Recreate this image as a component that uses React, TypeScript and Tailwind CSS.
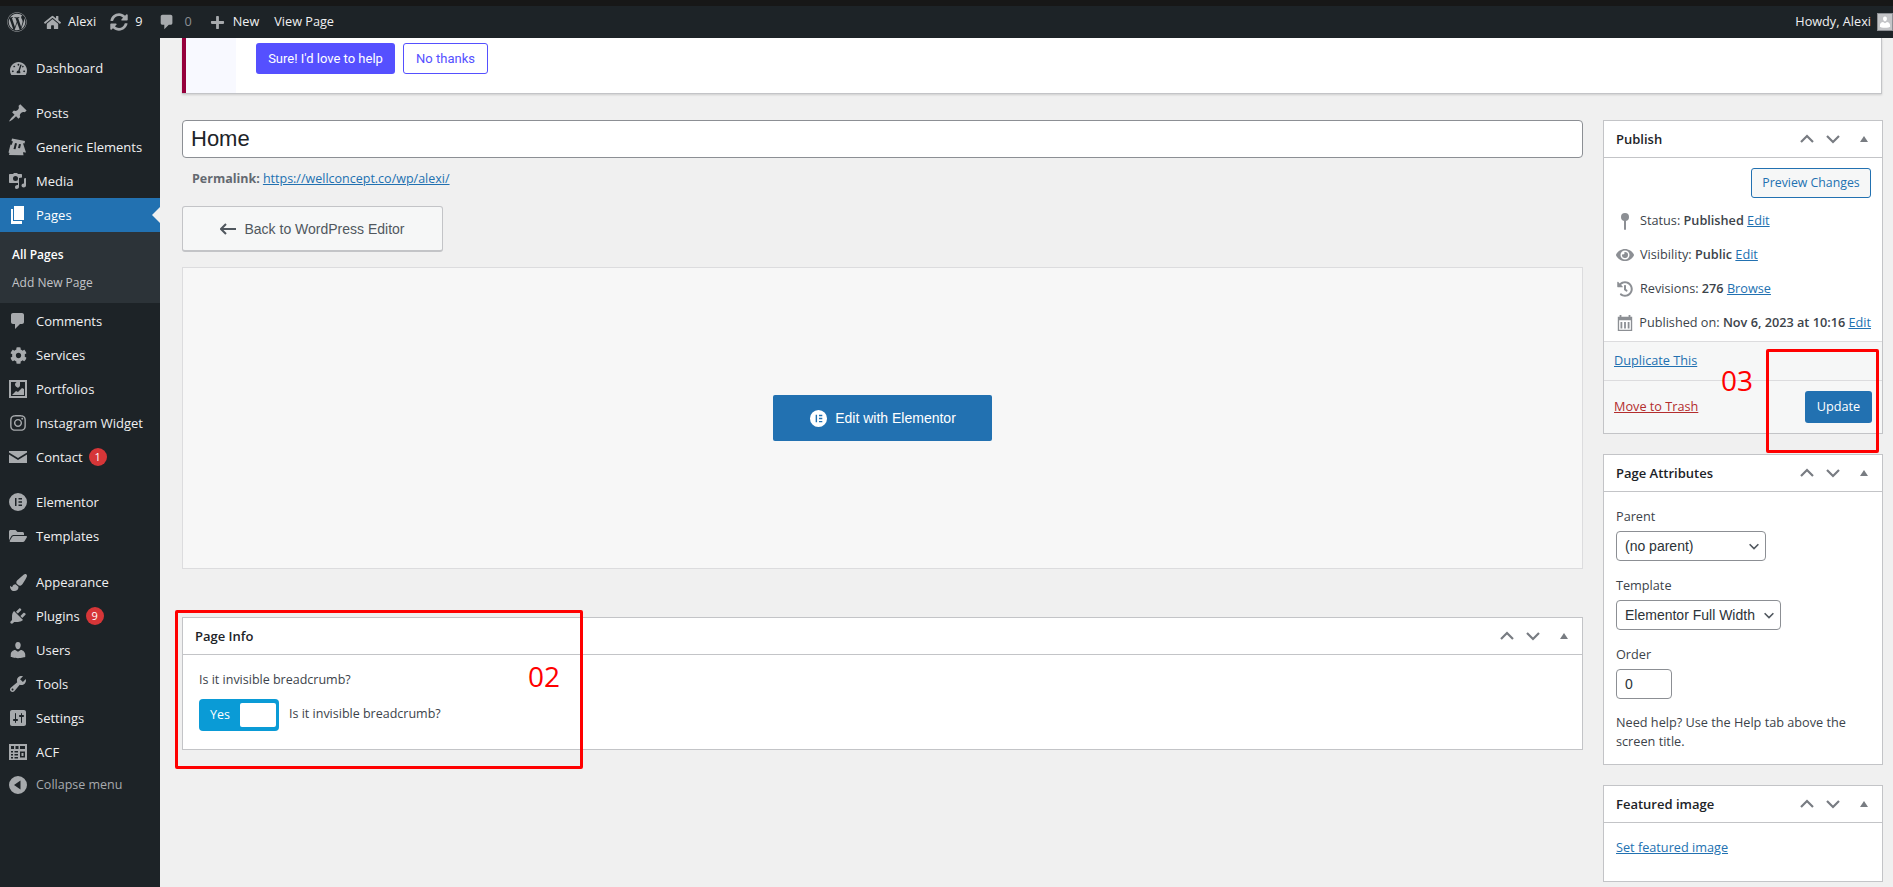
import type { ReactNode } from "react";
import {
  FaCog,
  FaEye,
  FaFolderOpen,
  FaHistory,
  FaHome,
  FaInstagram,
  FaPaintBrush,
  FaPlus,
  FaSyncAlt,
  FaTachometerAlt,
  FaWordpress,
} from "react-icons/fa";

function Dash({ d, className = "size-5" }: { d: string; className?: string }) {
  return (
    <svg viewBox="0 0 20 20" fill="currentColor" fillRule="evenodd" className={className}>
      <path d={d} />
    </svg>
  );
}

const postPath = "M10.44 3.02l1.82-1.82 6.36 6.35-1.83 1.82c-1.05-.68-2.48-.57-3.41.36l-.75.75c-.92.93-1.04 2.35-.35 3.41l-1.83 1.82-2.41-2.41-2.8 2.79c-.42.42-3.38 2.71-3.8 2.29s1.86-3.39 2.28-3.81l2.79-2.79L4.1 9.36l1.83-1.82c1.05.69 2.48.57 3.4-.36l.75-.75c.93-.92 1.05-2.35.36-3.41z";
const usersPath = "M10 9.25c-2.27 0-2.73-3.44-2.73-3.44C7 4.02 7.82 2 9.97 2c2.16 0 2.98 2.02 2.71 3.81 0 0-.41 3.44-2.68 3.44zm0 2.57L12.72 10c2.39 0 4.52 2.33 4.52 4.53v2.49s-3.65 1.13-7.24 1.13c-3.65 0-7.24-1.13-7.24-1.13v-2.49c0-2.25 1.94-4.48 4.47-4.48z";
const toolsPath = "M16.68 9.77c-1.34 1.34-3.3 1.67-4.95.99l-5.41 6.52c-.99.99-2.59.99-3.58 0s-.99-2.59 0-3.57l6.52-5.42c-.68-1.65-.35-3.61.99-4.95 1.28-1.28 3.12-1.62 4.72-1.06l-2.89 2.89 2.82 2.82 2.86-2.87c.53 1.58.18 3.39-1.08 4.65zM3.81 16.21c.4.39 1.04.39 1.43 0 .4-.4.4-1.04 0-1.43-.39-.4-1.03-.4-1.43 0-.39.39-.39 1.03 0 1.43z";
const commentPath = "M5 2h9c1.1 0 2 .9 2 2v7c0 1.1-.9 2-2 2h-2l-5 5v-5H5c-1.1 0-2-.9-2-2V4c0-1.1.9-2 2-2z";
const pluginPath = "M13.11 4.36L9.87 7.6 8 5.73l3.24-3.24c.35-.34 1.05-.2 1.56.32.52.51.66 1.21.31 1.55zm-8 1.77l.91-1.12 9.01 9.01-1.19.84c-.71.71-2.63 1.16-3.82 1.16H6.14L4.9 17.26c-.59.59-1.54.59-2.12 0-.59-.58-.59-1.53 0-2.12l1.24-1.24v-3.88c0-1.13.4-3.19 1.09-3.89zm7.26 3.97l3.24-3.24c.34-.35 1.04-.21 1.55.31.52.51.66 1.21.31 1.55l-3.24 3.25z";
const settingsPath = "M18 16V4c0-1.1-.9-2-2-2H4c-1.1 0-2 .9-2 2v12c0 1.1.9 2 2 2h12c1.1 0 2-.9 2-2zM8 11h1c.55 0 1 .45 1 1s-.45 1-1 1H8v1.5c0 .28-.22.5-.5.5s-.5-.22-.5-.5V13H6c-.55 0-1-.45-1-1s.45-1 1-1h1V5.500c0-.28.22-.5.5-.5s.5.22.5.5V11zm5-2h-1c-.55 0-1-.45-1-1s.45-1 1-1h1V5.500c0-.28.22-.5.5-.5s.5.22.5.5V7h1c.55 0 1 .45 1 1s-.45 1-1 1h-1v5.500c0 .28-.22.5-.5.5s-.5-.22-.5-.5V9z";
const mediaPath = "M2 3h3l1-1h3l1 1h3c.6 0 1 .4 1 1v2.500l-3 .6V16c0 1.200-1.300 2-2.500 2S7 17.200 7 16s1.300-2 2.500-2c.2 0 .4 0 .5.100V12H2c-.6 0-1-.4-1-1V4c0-.6.4-1 1-1zm5.500 2A2.500 2.500 0 1 0 7.500 10 2.500 2.500 0 0 0 7.500 5zM18 7v7.500c0 1.100-1.100 2-2.300 2s-2.200-.9-2.200-2 1-2 2.200-2c.1 0 .2 0 .3.100V7.500z";
const pagesPath = "M6 1h10v14H6zM3 4h2v12h9v3H3z";
const mailPath = "M1 4h18v1.500L10 11 1 5.500zM1 7.500l9 5.500 9-5.500V16H1z";
const portfolioPath = "M1 1h18v18H1zM3 3v14h14V3h-5v3.500c0 1-1 1.500-2 2.500-1-1-3-1.500-3-3.500 0-1 .8-2.500 2-2.500zM4 16l4-4 2 1 4-4 2 1v6z";
const elementorPath = "M10 1a9 9 0 1 0 0 18 9 9 0 0 0 0-18zM7 6h1.500v8H7zm3.500 0H14v1.500h-3.500zm0 3.200H14v1.600h-3.500zm0 3.300H14V14h-3.500z";
const acfPath = "M1 2h18v16H1zM3 4v3h3V4zm4.500 0v3h3V4zm4.500 0v3h5V4zM3 9v1.500h2V9zm3.500 0v1.500H10V9zM3 12v1.500h2V12zm3.500 0v1.500H10V12zM3 15v1.500h2V15zm3.500 0v1.500H10V15zM12 9.500v6h5v-6zm1.500 1.500h2v3h-2z";
const collapsePath = "M10 1a9 9 0 1 0 0 18 9 9 0 0 0 0-18zm2.500 4.500v9L6 10z";
const genericPath = "M4 1.500l13 2.500-.5 2.500-1.500-.2L18 15.500l-3-.3.5 3L1 18l.5-2-1-.4 2-8 1 .3L5 4.500 3.500 4zM7 6L5.500 12l2 .3L9 6.500zM11 7l-1 4 2 .3 1-4z";

type MenuRow = { label: string; icon: ReactNode; badge?: string; mt?: string };

const topRows: MenuRow[] = [
  { label: "Posts", icon: <Dash d={postPath} />, mt: "mt-[11px]" },
  { label: "Generic Elements", icon: <Dash d={genericPath} /> },
  { label: "Media", icon: <Dash d={mediaPath} /> },
];

const bottomRows: MenuRow[] = [
  { label: "Comments", icon: <Dash d={commentPath} /> },
  { label: "Services", icon: <FaCog className="size-[17px]" /> },
  { label: "Portfolios", icon: <Dash d={portfolioPath} /> },
  { label: "Instagram Widget", icon: <FaInstagram className="size-[18px]" /> },
  { label: "Contact", icon: <Dash d={mailPath} />, badge: "1" },
  { label: "Elementor", icon: <Dash d={elementorPath} />, mt: "mt-[11px]" },
  { label: "Templates", icon: <FaFolderOpen className="size-[18px]" /> },
  { label: "Appearance", icon: <FaPaintBrush className="size-[17px]" />, mt: "mt-3" },
  { label: "Plugins", icon: <Dash d={pluginPath} />, badge: "9" },
  { label: "Users", icon: <Dash d={usersPath} /> },
  { label: "Tools", icon: <Dash d={toolsPath} /> },
  { label: "Settings", icon: <Dash d={settingsPath} /> },
  { label: "ACF", icon: <Dash d={acfPath} /> },
];

function SideItem({ row }: { row: MenuRow }) {
  return (
    <div className={`flex h-[34px] items-center text-[13px] text-[#f0f0f1] ${row.mt ?? ""}`}>
      <span className="flex w-9 justify-center text-[#a7aaad]">{row.icon}</span>
      <span className="pt-[2px]">{row.label}</span>
      {row.badge && (
        <span className="ml-[6px] flex size-[18px] items-center justify-center rounded-full bg-[#d63638] text-[11px] text-white">
          {row.badge}
        </span>
      )}
    </div>
  );
}

function Sidebar() {
  return (
    <aside className="w-40 shrink-0 bg-[#1d2327] pt-[13px]">
      <SideItem row={{ label: "Dashboard", icon: <FaTachometerAlt className="size-[17px]" /> }} />
      {topRows.map((row) => (
        <SideItem key={row.label} row={row} />
      ))}
      <div className="relative flex h-[34px] items-center bg-[#2271b1] text-[13px] text-white">
        <span className="flex w-9 justify-center text-white">
          <Dash d={pagesPath} />
        </span>
        <span className="pt-[2px]">Pages</span>
        <span className="absolute top-[9px] right-0 border-y-8 border-r-8 border-y-transparent border-r-[#f0f0f0]" />
      </div>
      <div className="mb-px h-[71px] bg-[#2c3338] pt-[9px] pl-3 text-xs">
        <div className="flex h-7 items-center font-semibold text-white">All Pages</div>
        <div className="flex h-7 items-center text-[#c3c4c7]">Add New Page</div>
      </div>
      {bottomRows.map((row) => (
        <SideItem key={row.label} row={row} />
      ))}
      <div className="flex h-8 items-center text-[12.5px] text-[#a7aaad]">
        <span className="flex w-9 justify-center">
          <Dash d={collapsePath} />
        </span>
        <span>Collapse menu</span>
      </div>
    </aside>
  );
}

function AdminBar() {
  return (
    <header className="flex h-8 shrink-0 items-center bg-[#1d2327] text-[12.7px] text-[#f0f0f1]">
      <FaWordpress className="ml-[7px] size-5 text-[#a7aaad]" />
      <FaHome className="ml-[17px] size-[17px] text-[#a7aaad]" />
      <span className="ml-[7px]">Alexi</span>
      <FaSyncAlt className="ml-[14px] size-[18px] text-[#a7aaad]" />
      <span className="ml-[7px]">9</span>
      <span className="ml-4 text-[#a7aaad]">
        <Dash d={commentPath} className="size-[18px]" />
      </span>
      <span className="ml-[8px] text-[#8c8f94]">0</span>
      <FaPlus className="ml-[18px] size-[15px] text-[#a7aaad]" />
      <span className="ml-[8px]">New</span>
      <span className="ml-[15px]">View Page</span>
      <span className="mr-[6px] ml-auto">Howdy, Alexi</span>
      <span className="flex h-[18px] w-4 items-end justify-center overflow-hidden border border-[#8c8f94] bg-[#c3c4c7] text-white">
        <Dash d={usersPath} className="size-4" />
      </span>
    </header>
  );
}

function BoxControls() {
  return (
    <div className="flex items-center text-[#787c82]">
      <svg viewBox="0 0 16 10" className="h-[10px] w-4" fill="none" stroke="currentColor" strokeWidth="2.2">
        <path d="M2 8l6-6 6 6" />
      </svg>
      <svg viewBox="0 0 16 10" className="ml-[10px] h-[10px] w-4" fill="none" stroke="currentColor" strokeWidth="2.2">
        <path d="M2 2l6 6 6-6" />
      </svg>
      <span className="mr-[14px] ml-[19px] border-x-[4px] border-b-[6px] border-x-transparent border-b-current" />
    </div>
  );
}

function Box({ title, children, className = "" }: { title: string; children: ReactNode; className?: string }) {
  return (
    <section className={`border border-[#c3c4c7] bg-white ${className}`}>
      <div className="flex h-[37px] items-center justify-between border-b border-[#c3c4c7] pl-[12px]">
        <h2 className="pt-px text-[13px] font-semibold text-[#1d2327]">{title}</h2>
        <BoxControls />
      </div>
      {children}
    </section>
  );
}

function Link({ children }: { children: ReactNode }) {
  return <a className="text-[#2271b1] underline">{children}</a>;
}

function PublishRow({ icon, children }: { icon: ReactNode; children: ReactNode }) {
  return (
    <div className="flex h-[34px] items-center whitespace-nowrap">
      <span className="flex w-[25px] justify-center pr-[5px] text-[#8c8f94]">{icon}</span>
      <span>{children}</span>
    </div>
  );
}

function FakeSelect({ value, width }: { value: string; width: string }) {
  return (
    <div className={`mt-[6px] flex h-[30px] items-center justify-between rounded-[4px] border border-[#8c8f94] pr-[4px] pl-2 font-["Liberation_Sans",sans-serif] text-sm text-[#2c3338] ${width}`}>
      <span>{value}</span>
      <svg viewBox="0 0 16 16" className="size-[14px]" fill="none" stroke="#50575e" strokeWidth="1.8">
        <path d="M3 6l5 5 5-5" />
      </svg>
    </div>
  );
}

function PublishBox() {
  return (
    <Box title="Publish">
      <div className="px-[11px] pt-[10px] pb-[1px]">
        <div className="flex justify-end">
          <div className="flex h-[30px] w-[120px] items-center justify-center rounded-[3px] border border-[#2271b1] bg-[#f6f7f7] pt-px text-[12.3px] text-[#2271b1]">
            Preview Changes
          </div>
        </div>
        <div className="mt-[6px]">
          <PublishRow
            icon={
              <svg viewBox="0 0 20 20" className="size-5" fill="currentColor">
                <circle cx="10" cy="6" r="4" />
                <rect x="9" y="9" width="2" height="10" rx="1" />
              </svg>
            }
          >
            Status: <b className="font-semibold">Published</b> <Link>Edit</Link>
          </PublishRow>
          <PublishRow icon={<FaEye className="size-[18px]" />}>
            Visibility: <b className="font-semibold">Public</b> <Link>Edit</Link>
          </PublishRow>
          <PublishRow icon={<FaHistory className="size-4" />}>
            Revisions: <b className="font-semibold">276</b> <Link>Browse</Link>
          </PublishRow>
          <PublishRow
            icon={
              <svg viewBox="0 0 20 20" className="size-[18px]" fill="currentColor">
                <path d="M2 3h2V1h2v2h8V1h2v2h2v16H2zm1.500 4v10.500h13V7zM5 9h2v7H5zm4 0h2v7H9zm4 0h2v7h-2z" fillRule="evenodd" />
              </svg>
            }
          >
            Published on: <b className="font-semibold">Nov 6, 2023 at 10:16</b> <Link>Edit</Link>
          </PublishRow>
        </div>
      </div>
      <div className="border-t border-[#dcdcde] bg-[#f6f7f7]">
        <div className="flex h-[39px] items-center border-b border-[#dcdcde] pl-[10px]">
          <Link>Duplicate This</Link>
        </div>
        <div className="flex h-[52px] items-center justify-between pr-[10px] pl-[10px]">
          <a className="text-[#b32d2e] underline">Move to Trash</a>
          <div className="flex h-[32px] w-[67px] items-center justify-center rounded-[3px] bg-[#2271b1] text-white">Update</div>
        </div>
      </div>
    </Box>
  );
}

function AttributesBox() {
  return (
    <Box title="Page Attributes" className="mt-5 h-[311px]">
      <div className="px-3 pt-[15px]">
        <p className="h-[18px] leading-[18px]">Parent</p>
        <FakeSelect value="(no parent)" width="w-[150px]" />
        <p className="mt-[15px] h-[18px] leading-[18px]">Template</p>
        <FakeSelect value="Elementor Full Width" width="w-[165px]" />
        <p className="mt-[15px] h-[18px] leading-[18px]">Order</p>
        <div className='mt-[6px] flex h-[30px] w-[56px] items-center rounded-[4px] border border-[#8c8f94] pl-2 font-["Liberation_Sans",sans-serif] text-sm text-[#2c3338]'>
          0
        </div>
        <p className="mt-[14px] leading-[19px]">Need help? Use the Help tab above the screen title.</p>
      </div>
    </Box>
  );
}

function EditorColumn() {
  return (
    <div className="min-w-0 flex-1 text-[12.5px]">
      <input
        readOnly
        value="Home"
        className='block h-[38px] w-full rounded-[4px] border border-[#8c8f94] bg-white px-[8px] font-["Liberation_Sans",sans-serif] text-[22px] text-[#1d2327]'
      />
      <div className="mt-[12px] flex h-[18px] items-center gap-[3px] pl-[10px] text-[#646970]">
        <b className="font-bold">Permalink:</b>
        <Link>https://wellconcept.co/wp/alexi/</Link>
      </div>
      <div className='mt-[18px] flex h-[46px] w-[261px] items-center justify-center gap-2 rounded-[3px] border border-b-2 border-[#c3c4c7] bg-[#f6f7f7] font-["Liberation_Sans",sans-serif] text-sm text-[#50575e]'>
        <svg viewBox="0 0 16 12" className="h-3 w-4" fill="none" stroke="currentColor" strokeWidth="2">
          <path d="M16 6H1M6 1L1 6l5 5" />
        </svg>
        Back to WordPress Editor
      </div>
      <div className="mt-[15px] flex h-[302px] items-center justify-center border border-[#dcdcde] bg-[#f7f7f7]">
        <div className='flex h-[46px] w-[219px] items-center justify-center gap-[7px] rounded-[2px] bg-[#2271b1] font-["Liberation_Sans",sans-serif] text-sm text-white'>
          <span className="text-white">
            <Dash d={elementorPath} className="size-[19px]" />
          </span>
          Edit with Elementor
        </div>
      </div>
      <Box title="Page Info" className="mt-[48px] h-[133px]">
        <div className="pt-[16px] pl-[16px]">
          <p className="h-[18px] leading-[18px]">Is it invisible breadcrumb?</p>
          <div className="mt-[10px] flex items-center gap-[10px]">
            <div className="flex h-[32px] w-[80px] items-center justify-between rounded-[4px] bg-[#0a9bd6] pr-[3px] pl-[11px] text-white">
              <span>Yes</span>
              <span className="h-[24px] w-[36px] rounded-[2px] bg-white" />
            </div>
            <span className="-mt-[2px]">Is it invisible breadcrumb?</span>
          </div>
        </div>
      </Box>
    </div>
  );
}

function Notice() {
  return (
    <div className="mr-px flex h-[56px] shrink-0 border-r border-b border-[#c3c4c7] bg-white shadow-[0_1px_2px_rgba(0,0,0,0.15)]">
      <div className="w-[54px] border-l-4 border-[#96003c] bg-[#f8f9ff]" />
      <div className="flex items-start gap-2 pt-[5px] pl-5 font-['Roboto',sans-serif] text-[13px]">
        <div className="flex h-[31px] w-[139px] items-center justify-center rounded-[3px] bg-[#5550ff] text-white">
          Sure! I'd love to help
        </div>
        <div className="flex h-[31px] w-[85px] items-center justify-center rounded-[3px] border border-[#5550ff] bg-white text-[#5550ff]">
          No thanks
        </div>
      </div>
    </div>
  );
}

export default function App() {
  return (
    <div className="relative flex h-[887px] flex-col overflow-hidden bg-[#f0f0f0] font-['Open_Sans',sans-serif] text-[12.7px] text-[#3c434a]">
      <div className="h-[6px] shrink-0 bg-[#171717]" />
      <AdminBar />
      <div className="flex min-h-0 flex-1">
        <Sidebar />
        <main className="flex min-w-0 flex-1 flex-col pr-[10px] pl-[22px]">
          <Notice />
          <div className="mt-[26px] flex gap-5">
            <EditorColumn />
            <div className="w-[280px] shrink-0">
              <PublishBox />
              <AttributesBox />
              <Box title="Featured image" className="mt-[20px] h-[97px]">
                <div className="pt-[15px] pl-3">
                  <Link>Set featured image</Link>
                </div>
              </Box>
            </div>
          </div>
        </main>
      </div>
      {/* annotations drawn on top of the screenshot */}
      <div className="absolute top-[610px] left-[175px] h-[159px] w-[408px] rounded-[2px] border-[3px] border-[#ff0000]" />
      <div className="absolute top-[349px] left-[1766px] h-[104px] w-[113px] rounded-[2px] border-[3px] border-[#ff0000]" />
      <span className="absolute top-[657px] left-[528px] text-[28px] leading-[38px] text-[#ff0000]">02</span>
      <span className="absolute top-[361px] left-[1721px] text-[28px] leading-[38px] text-[#ff0000]">03</span>
    </div>
  );
}
